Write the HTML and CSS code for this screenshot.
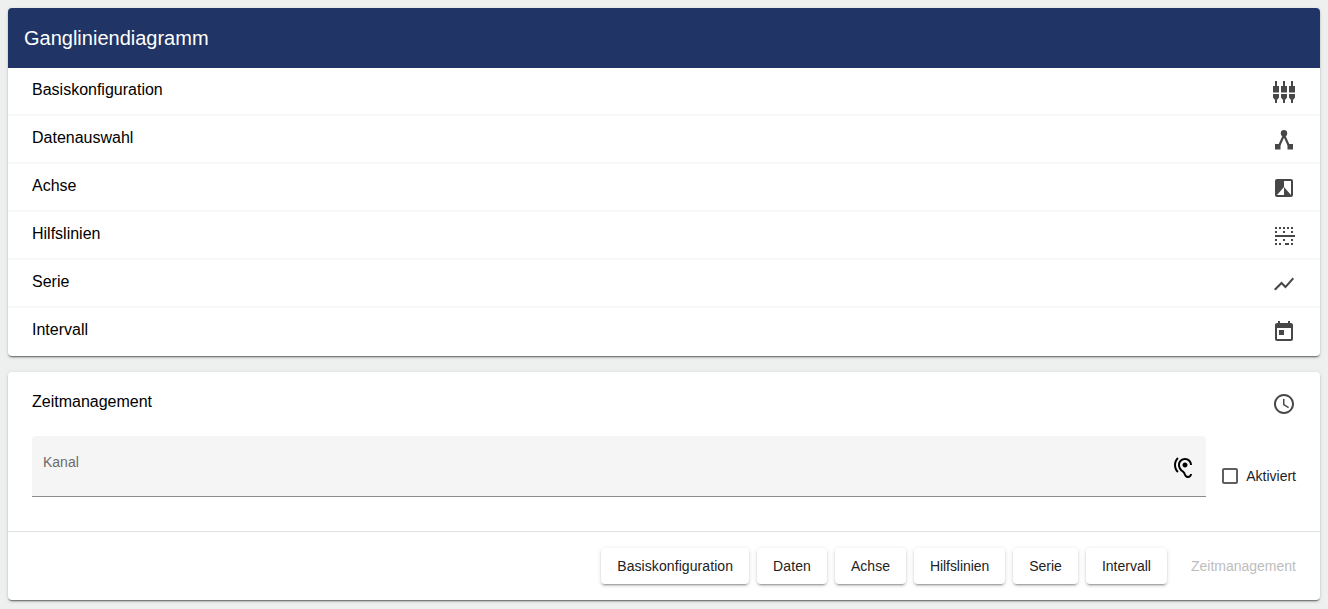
FILE: index.html
```html
<!DOCTYPE html>
<html lang="de">
<head>
<meta charset="utf-8">
<title>Gangliniendiagramm</title>
<link rel="stylesheet" href="styles.css">
</head>
<body>
<section class="card main-card">
  <header class="card-header">Gangliniendiagramm</header>
  <div class="row"><span>Basiskonfiguration</span>
    <svg class="icon" viewBox="0 0 24 24"><path d="M3 1h2v5h2v6.500H1V6h2zM11 1h2v5h2v6.500H9V6h2zM19 1h2v5h2v6.500h-6V6h2zM1 14h6v3.500L5 20v3H3v-3L1 17.500zM9 14h6v3.500L13 20v3h-2v-3L9 17.500zM17 14h6v3.500L21 20v3h-2v-3L17 17.500z"/></svg>
  </div>
  <div class="row"><span>Datenauswahl</span>
    <svg class="icon" viewBox="0 0 24 24"><circle cx="12" cy="5.300" r="3.200"/><path d="M3 16h5.500v5.500H3zM15.500 16H21v5.500h-5.500z"/><path class="line" d="M12 7 7.500 17M12 7l4.500 10"/></svg>
  </div>
  <div class="row"><span>Achse</span>
    <svg class="icon" viewBox="0 0 24 24"><path d="M19 3H5c-1.100 0-2 .9-2 2v14c0 1.100.9 2 2 2h14c1.100 0 2-.9 2-2V5c0-1.100-.9-2-2-2zm0 16l-7-8v8H5l7-8V5h7v14z"/></svg>
  </div>
  <div class="row"><span>Hilfslinien</span>
    <svg class="icon" viewBox="0 0 24 24"><path d="M3 21h2v-2H3v2zM5 7H3v2h2V7zM3 17h2v-2H3v2zm4 4h2v-2H7v2zM5 3H3v2h2V3zm4 0H7v2h2V3zm8 0h-2v2h2V3zm-4 4h-2v2h2V7zm0-4h-2v2h2V3zm6 14h2v-2h-2v2zm-6 4h2v-2h-2v2zm-8-8h18v-2H3v2zM19 3v2h2V3h-2zm0 6h2V7h-2v2zm-8 8h2v-2h-2v2zm4 4h2v-2h-2v2zm4 0h2v-2h-2v2z"/></svg>
  </div>
  <div class="row"><span>Serie</span>
    <svg class="icon" viewBox="0 0 24 24"><path d="M3.500 18.490l6-6.010 4 4L22 6.920l-1.410-1.410-7.090 7.970-4-4L2 16.990z"/></svg>
  </div>
  <div class="row"><span>Intervall</span>
    <svg class="icon" viewBox="0 0 24 24"><path d="M19 3h-1V1h-2v2H8V1H6v2H5c-1.110 0-1.990.9-1.990 2L3 19c0 1.100.89 2 2 2h14c1.100 0 2-.9 2-2V5c0-1.100-.9-2-2-2zm0 16H5V8h14v11zM7 10h5v5H7z"/></svg>
  </div>
</section>
<section class="card time-card">
  <div class="row time-head"><span>Zeitmanagement</span>
    <svg class="icon" viewBox="0 0 24 24"><path d="M11.990 2C6.470 2 2 6.480 2 12s4.470 10 9.990 10C17.520 22 22 17.520 22 12S17.520 2 11.990 2zM12 20c-4.420 0-8-3.580-8-8s3.580-8 8-8 8 3.580 8 8-3.580 8-8 8zm.5-13H11v6l5.250 3.150.75-1.230-4.500-2.670z"/></svg>
  </div>
  <div class="time-body">
    <div class="field">
      <span class="field-label">Kanal</span>
      <svg class="ear" viewBox="0 0 24 24"><path d="M17 20c-.29 0-.56-.06-.76-.15-.71-.37-1.210-.88-1.710-2.380-.51-1.560-1.470-2.290-2.390-3-.79-.61-1.610-1.240-2.320-2.530C9.290 10.980 9 9.930 9 9c0-2.800 2.200-5 5-5s5 2.200 5 5h2c0-3.930-3.070-7-7-7S7 5.070 7 9c0 1.260.38 2.650 1.070 3.900.91 1.650 1.980 2.480 2.850 3.150.81.62 1.390 1.070 1.710 2.050.6 1.820 1.370 2.840 2.730 3.550.51.23 1.070.35 1.640.35 2.210 0 4-1.790 4-4h-2c0 1.100-.9 2-2 2zM7.640 2.640L6.220 1.220C4.230 3.210 3 5.960 3 9s1.230 5.790 3.220 7.780l1.410-1.410C6.010 13.740 5 11.490 5 9s1.010-4.740 2.640-6.360zM11.500 9c0 1.380 1.120 2.500 2.500 2.500s2.500-1.120 2.500-2.500-1.120-2.500-2.500-2.500-2.500 1.120-2.500 2.500z"/></svg>
    </div>
    <label class="check"><span class="box"></span>Aktiviert</label>
  </div>
  <footer class="actions">
    <button class="btn btn-wide">Basiskonfiguration</button>
    <button class="btn btn-daten">Daten</button>
    <button class="btn">Achse</button>
    <button class="btn btn-tight">Hilfslinien</button>
    <button class="btn">Serie</button>
    <button class="btn">Intervall</button>
    <button class="btn disabled">Zeitmanagement</button>
  </footer>
</section>
</body>
</html>
```
FILE: styles.css
```css
* { box-sizing: border-box; }
html, body { height: 100%; }
body {
  margin: 0;
  padding: 8px;
  background: #eef0f0;
  font-family: "Liberation Sans", Arial, sans-serif;
  color: #000;
  overflow: hidden;
}
.card {
  background: #fff;
  border-radius: 4px;
  box-shadow: 0 2px 2px -1px rgba(0,0,0,.5), 0 1px 1px 0 rgba(0,0,0,.14), 0 1px 4px 0 rgba(0,0,0,.12);
}
.main-card { margin-bottom: 16px; }
.card-header {
  height: 60px;
  padding-left: 16px;
  display: flex;
  align-items: center;
  background: #203465;
  color: #fff;
  font-size: 20px;
  border-radius: 4px 4px 0 0;
}
.row {
  height: 48px;
  padding: 13px 24px 0;
  display: flex;
  justify-content: space-between;
  align-items: flex-start;
  font-size: 16px;
  line-height: 18px;
  border-bottom: 2px solid #f8f8f8;
}
.row:last-child { border-bottom: 0; }
.icon {
  width: 24px;
  height: 24px;
  margin-top: -1px;
  fill: #474747;
  flex: none;
}
.line { fill: none; stroke: #474747; stroke-width: 2.200; }
.time-head {
  height: 64px;
  padding-top: 21px;
  border-bottom: 0;
}
.time-body {
  display: flex;
  align-items: flex-start;
  gap: 16px;
  padding: 0 24px;
  height: 96px;
  border-bottom: 1px solid #e0e0e0;
}
.field {
  flex: 1;
  height: 61px;
  background: #f5f5f5;
  border-radius: 4px 4px 0 0;
  border-bottom: 1px solid #8c8c8c;
  padding: 18px 11px 0;
  display: flex;
  justify-content: space-between;
  align-items: flex-start;
}
.field-label { font-size: 14px; line-height: 16px; color: #6b6b6b; }
.ear { width: 24px; height: 24px; margin-top: 2px; fill: #000; }
.check {
  display: flex;
  align-items: center;
  gap: 8px;
  font-size: 14px;
  height: 16px;
  margin-top: 32px;
  color: #222;
}
.box {
  width: 16px;
  height: 16px;
  border: 2px solid #5f5f5f;
  border-radius: 2px;
}
.actions {
  display: flex;
  justify-content: flex-end;
  gap: 8px;
  padding: 16px 8px;
}
.btn {
  height: 36px;
  padding: 0 16px;
  border: 0;
  border-radius: 4px;
  background: #fff;
  color: #222;
  font: 14px "Liberation Sans", Arial, sans-serif;
  box-shadow: 0 3px 1px -2px rgba(0,0,0,.2), 0 2px 2px 0 rgba(0,0,0,.14), 0 1px 5px 0 rgba(0,0,0,.12);
}
.btn-wide { letter-spacing: .08px; }
.btn-daten { letter-spacing: .12px; }
.btn-tight { letter-spacing: -.06px; }
.btn.disabled { color: #bdbdbd; box-shadow: none; }
```
